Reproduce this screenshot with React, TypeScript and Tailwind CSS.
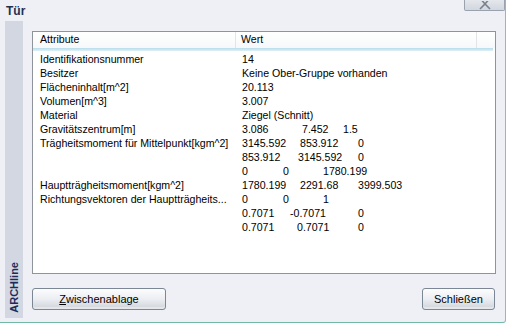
type Seg = { t: string; w?: string };
type Row = { label: string; vals: Seg[] };

const rows: Row[] = [
  { label: "Identifikationsnummer", vals: [{ t: "14" }] },
  { label: "Besitzer", vals: [{ t: "Keine Ober-Gruppe vorhanden" }] },
  { label: "Flächeninhalt[m^2]", vals: [{ t: "20.113" }] },
  { label: "Volumen[m^3]", vals: [{ t: "3.007" }] },
  { label: "Material", vals: [{ t: "Ziegel (Schnitt)" }] },
  {
    label: "Gravitätszentrum[m]",
    vals: [{ t: "3.086", w: "w-[60px]" }, { t: "7.452", w: "w-[41px]" }, { t: "1.5" }],
  },
  {
    label: "Trägheitsmoment für Mittelpunkt[kgm^2]",
    vals: [{ t: "3145.592", w: "w-[58px]" }, { t: "853.912", w: "w-[58px]" }, { t: "0" }],
  },
  {
    label: "",
    vals: [{ t: "853.912", w: "w-[56px]" }, { t: "3145.592", w: "w-[60px]" }, { t: "0" }],
  },
  {
    label: "",
    vals: [{ t: "0", w: "w-[41px]" }, { t: "0", w: "w-[40px]" }, { t: "1780.199" }],
  },
  {
    label: "Hauptträgheitsmoment[kgm^2]",
    vals: [{ t: "1780.199", w: "w-[58px]" }, { t: "2291.68", w: "w-[58px]" }, { t: "3999.503" }],
  },
  {
    label: "Richtungsvektoren der Hauptträgheits...",
    vals: [{ t: "0", w: "w-[41px]" }, { t: "0", w: "w-[40px]" }, { t: "1" }],
  },
  {
    label: "",
    vals: [{ t: "0.7071", w: "w-[48px]" }, { t: "-0.7071", w: "w-[68px]" }, { t: "0" }],
  },
  {
    label: "",
    vals: [{ t: "0.7071", w: "w-[55px]" }, { t: "0.7071", w: "w-[61px]" }, { t: "0" }],
  },
];

function XpButton({ children, className }: { children: React.ReactNode; className: string }) {
  return (
    <div
      className={
        "h-[22px] flex items-center justify-center rounded-[3px] border border-[#7b8794] bg-gradient-to-b from-[#fdfdfd] via-[#eceef2] to-[#cfd3da] text-[11px] text-black shadow-[inset_0_-2px_0_#e4e6ea] " +
        className
      }
    >
      {children}
    </div>
  );
}

export default function App() {
  return (
    <div className="w-[509px] h-[324px] bg-white font-['Liberation_Sans',Arial,sans-serif]">
      <div className="w-[506px] h-[323px] bg-[#eff0f5] border-r border-b border-r-[#a9aeb8] border-b-[#72b9aa] rounded-br-[3px] flex flex-col">
        {/* title */}
        <div className="h-[21px] relative flex items-start">
          <span className="ml-[6px] mt-[2px] text-[12px] font-bold text-[#1b3152]">Tür</span>
          <div className="absolute right-[0px] top-0 w-[41px] h-[11px] rounded-b-[2px] border border-t-0 border-[#9aa2ae] bg-gradient-to-b from-[#e4e7ec] to-[#d2d6de] flex justify-center items-start">
            <svg width="12" height="9" viewBox="0 0 12 9" className="mt-[1px]">
              <path d="M1 -3 L6 3 L11 -3 M1 8 L6 3 L11 8" stroke="#7a828e" strokeWidth="1.6" fill="none" />
            </svg>
          </div>
        </div>

        <div className="flex flex-1 pb-[4px]">
          {/* side strip */}
          <div className="ml-[5px] w-[18px] bg-[#d2d7e1] flex flex-col justify-end items-center pb-[5px]">
            <span className="[writing-mode:vertical-rl] rotate-180 font-bold text-[11px] leading-[18px] text-[#1c2c5a]">
              ARCHline
            </span>
          </div>

          <div className="ml-[9px] flex-1 flex flex-col pt-[10px] pr-[9px]">
            {/* list view */}
            <div className="h-[243px] border border-[#8f949c] bg-white text-[10.6px] text-black">
              <div className="h-[16px] flex items-center bg-gradient-to-b from-white to-[#f7f8f9]">
                <div className="w-[203px] pl-[7px] h-full flex items-center border-r border-[#e2e4e7]">Attribute</div>
                <div className="w-[241px] pl-[5px] h-full flex items-center border-r border-[#e2e4e7]">Wert</div>
              </div>
              <div className="h-[3px] mr-[2px] bg-gradient-to-b from-[#b7dcea] to-[#dff0f6]" />
              <div className="pt-[1px]">
                {rows.map((r, i) => (
                  <div key={i} className="h-[14px] flex items-center leading-[14px] whitespace-nowrap">
                    <div className="w-[203px] pl-[7px]">{r.label}</div>
                    <div className="pl-[6px] flex">
                      {r.vals.map((v, j) => (
                        <span key={j} className={v.w ?? ""}>
                          {v.t}
                        </span>
                      ))}
                    </div>
                  </div>
                ))}
              </div>
            </div>

            {/* buttons */}
            <div className="mt-[14px] flex justify-between">
              <XpButton className="w-[134px]">
                <span>
                  <span className="underline">Z</span>wischenablage
                </span>
              </XpButton>
              <XpButton className="w-[73px] mr-[1px]">Schließen</XpButton>
            </div>
          </div>
        </div>
      </div>
    </div>
  );
}
